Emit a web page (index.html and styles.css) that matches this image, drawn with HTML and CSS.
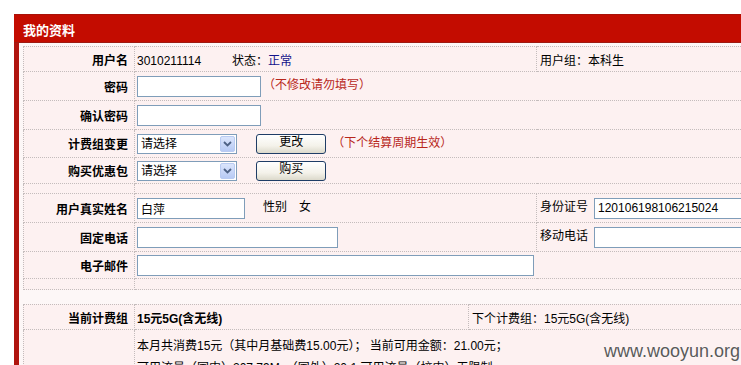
FILE: index.html
```html
<!DOCTYPE html>
<html lang="zh-CN">
<head>
  <meta charset="UTF-8" />
  <title>我的资料</title>
  <link rel="stylesheet" href="styles.css">
</head>
<body>
  <div class="panel">
    <div class="panel-head">我的资料</div>
    <div class="panel-body">

      <table class="grid info">
        <colgroup><col class="c-label"><col class="c-main"><col></colgroup>
        <tr class="r-user">
          <th>用户名</th>
          <td><span class="uid">3010211114</span>状态：<span class="ok">正常</span></td>
          <td class="side">用户组：本科生</td>
        </tr>
        <tr class="r-pass">
          <th>密码</th>
          <td colspan="2"><input type="password" class="txt w-pass"><span class="note">（不修改请勿填写）</span></td>
        </tr>
        <tr class="r-pass">
          <th>确认密码</th>
          <td colspan="2"><input type="password" class="txt w-pass" autofocus></td>
        </tr>
        <tr class="r-sel">
          <th>计费组变更</th>
          <td colspan="2">
            <span class="sel"><select><option>请选择</option></select><span class="sel-btn"><svg width="9" height="6" viewBox="0 0 9 6"><path d="M1 1l3.5 3.5L8 1" stroke="#4d6185" stroke-width="1.8" fill="none"/></svg></span></span>
            <button class="btn">更改</button><span class="note note-sel">（下个结算周期生效）</span>
          </td>
        </tr>
        <tr class="r-sel2">
          <th>购买优惠包</th>
          <td colspan="2">
            <span class="sel"><select><option>请选择</option></select><span class="sel-btn"><svg width="9" height="6" viewBox="0 0 9 6"><path d="M1 1l3.5 3.5L8 1" stroke="#4d6185" stroke-width="1.8" fill="none"/></svg></span></span>
            <button class="btn">购买</button>
          </td>
        </tr>
        <tr class="r-gap"><th></th><td colspan="2"></td></tr>
        <tr class="r-field">
          <th>用户真实姓名</th>
          <td><input type="text" class="txt w-name" value="白萍"><span class="sex">性别</span>女</td>
          <td class="side">身份证号<input type="text" class="txt w-side" value="120106198106215024"></td>
        </tr>
        <tr class="r-field">
          <th>固定电话</th>
          <td><input type="text" class="txt w-phone"></td>
          <td class="side">移动电话<input type="text" class="txt w-side"></td>
        </tr>
        <tr class="r-mail">
          <th>电子邮件</th>
          <td colspan="2"><input type="text" class="txt w-mail"></td>
        </tr>
        <tr class="r-gap r-end"><th></th><td colspan="2"></td></tr>
      </table>

      <table class="grid plan">
        <colgroup><col class="c-label"><col class="c-plan"><col></colgroup>
        <tr class="r-user">
          <th>当前计费组</th>
          <td class="strong">15元5G(含无线)</td>
          <td class="side">下个计费组：15元5G(含无线)</td>
        </tr>
        <tr class="r-usage">
          <th></th>
          <td colspan="2">
            <p>本月共消费15元（其中月基础费15.00元）； 当前可用金额：21.00元；</p>
            <p>可用流量（国内）207.79M，（国外）20.1 可用流量（校内）无限制</p>
          </td>
        </tr>
      </table>

    </div>
  </div>

  <div class="mark">www.wooyun.org</div>
</body>
</html>
```

FILE: styles.css
```css
html, body {
  height: 100%;
}

body {
  margin: 0;
  padding: 14px 0 0 14px;
  box-sizing: border-box;
  background: #fff;
  color: #000;
  font-family: "Liberation Sans", "Noto Sans CJK SC", sans-serif;
  font-size: 12px;
  overflow: hidden;
  position: relative;
}

.panel {
  width: 780px;
}

.panel-head {
  height: 29px;
  line-height: 29px;
  box-sizing: border-box;
  padding-left: 9px;
  background: #c30c00;
  border-top: 1px solid #a81208;
  border-bottom: 1px solid #9e1a12;
  color: #fff;
  font-size: 13px;
  font-weight: bold;
  font-family: "Noto Sans CJK SC", sans-serif;
}

.panel-body {
  border-left: 5px solid #b0140e;
  background: #fdf7f7;
  padding: 3px 0 0 4px;
  height: 400px;
}

/* tables */
.grid {
  width: 760px;
  table-layout: fixed;
  border-collapse: collapse;
  border: 1px dotted #6f6f6f;
  background: #fdf1f1;
}

.grid th,
.grid td {
  border: 1px dotted #c4bcbc;
  padding: 0 0 0 2px;
  vertical-align: middle;
  font-weight: normal;
  white-space: nowrap;
}

.grid th {
  text-align: right;
  font-weight: bold;
  padding: 0 6px 0 0;
  font-family: "Noto Sans CJK SC", sans-serif;
}

.c-label { width: 111px; }
.c-main { width: 402px; }
.c-plan { width: 334px; }

.r-user { height: 25px; }
.r-pass { height: 29px; }
.r-sel { height: 28px; }
.r-sel2 { height: 26px; }
.r-gap { height: 10px; }
.r-end { height: 11px; }
.r-field { height: 29px; }
.r-mail { height: 27px; }

.grid td.side {
  padding-left: 3px;
}

.grid td.strong {
  font-weight: bold;
}

.uid {
  display: inline-block;
  width: 95px;
}

.ok {
  color: #13138a;
}

/* form controls */
.txt {
  box-sizing: border-box;
  height: 21px;
  border: 1px solid #7f9db9;
  background: #fff;
  padding: 0 3px;
  margin: 0;
  font: inherit;
  vertical-align: middle;
}

.txt:focus {
  outline: none;
}

.w-pass { width: 124px; }
.w-name { width: 108px; }
.w-phone { width: 201px; }
.w-mail { width: 397px; }
.w-side { width: 170px; margin-left: 6px; }

.note {
  color: #b8261a;
  margin-left: 2px;
}

.note-sel {
  margin-left: 6px;
}

.sex {
  margin: 0 12px 0 18px;
}

.sel {
  display: inline-flex;
  box-sizing: border-box;
  width: 100px;
  height: 20px;
  border: 1px solid #7f9db9;
  background: #fff;
  vertical-align: middle;
}

.sel select {
  appearance: none;
  -webkit-appearance: none;
  flex: 1;
  min-width: 0;
  border: 0;
  outline: 0;
  background: transparent;
  font: inherit;
  padding: 0 3px;
}

.sel-btn {
  width: 15px;
  margin: 1px;
  box-sizing: border-box;
  border: 1px solid #b9cbf2;
  border-radius: 2px;
  background: linear-gradient(#dbe5fc, #b7caf5);
  display: flex;
  align-items: center;
  justify-content: center;
}

.btn {
  box-sizing: border-box;
  width: 70px;
  height: 20px;
  margin-left: 16px;
  padding: 0 0 3px;
  border: 1px solid #1f3d66;
  border-radius: 3px;
  background: linear-gradient(#ffffff, #f4f2ea 60%, #dcd9cb);
  font: inherit;
  line-height: 14px;
  vertical-align: middle;
}

/* plan table */
.plan {
  margin-top: 14px;
}

.r-usage td {
  vertical-align: top;
  padding: 5px 0 0 2px;
}

.r-usage p {
  margin: 0;
  line-height: 22px;
}

.mark {
  position: absolute;
  right: 1px;
  bottom: 3px;
  color: #5a5a5a;
  font-family: "Liberation Sans", sans-serif;
  font-size: 18px;
  text-shadow: 0 0 2px #fff;
}
```
